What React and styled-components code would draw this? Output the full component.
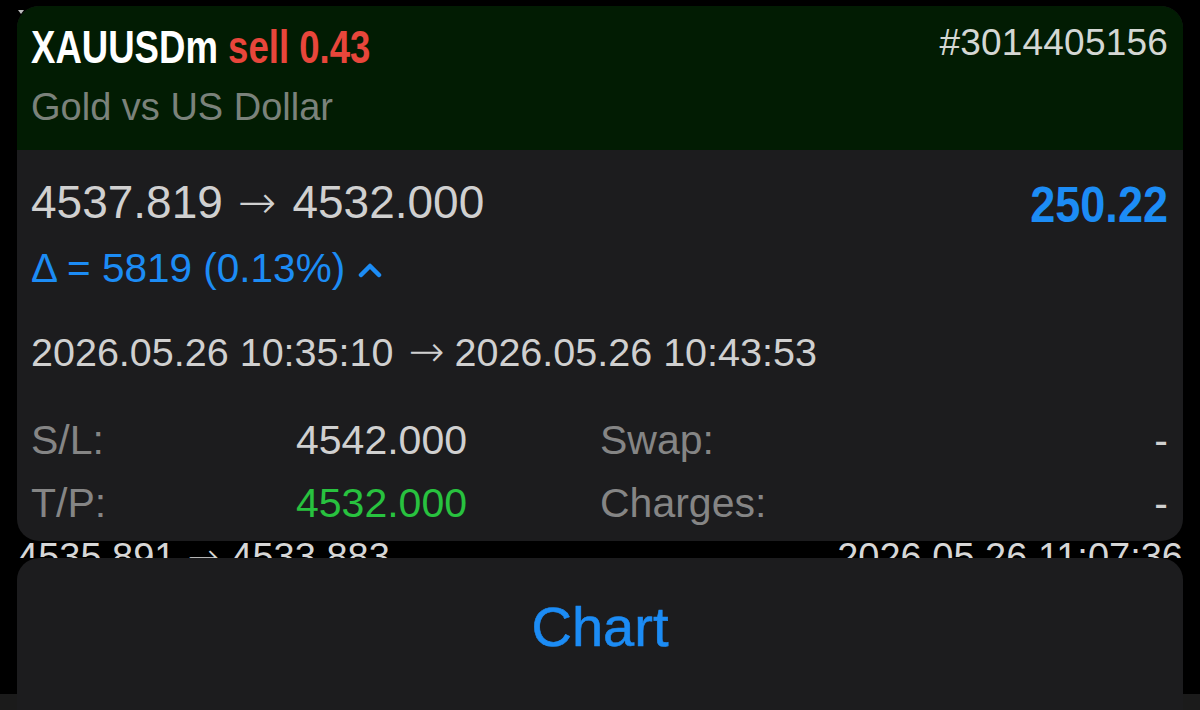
import React from "react";
import styled, { createGlobalStyle } from "styled-components";

const Global = createGlobalStyle`
  html, body { margin: 0; padding: 0; background: #000; }
  body { font-family: "Liberation Sans", Arial, sans-serif; -webkit-font-smoothing: antialiased; }
  #root { width: 1200px; height: 710px; overflow: hidden; }
`;

const Page = styled.div`
  position: relative;
  width: 1200px;
  height: 710px;
  background: #000;
  display: flex;
  flex-direction: column;
  padding-top: 6px;
  box-sizing: border-box;
  overflow: hidden;
`;

const Caret = styled.div`
  position: absolute;
  left: 18px;
  top: 10px;
  width: 0;
  height: 0;
  border-left: 3px solid transparent;
  border-right: 3px solid transparent;
  border-top: 4px solid #bdbdbd;
  z-index: 0;
`;

const Card = styled.section`
  position: relative;
  z-index: 1;
  margin: 0 17px;
  border-radius: 22px;
  overflow: hidden;
  background: #1c1c1e;
`;

const Header = styled.header`
  background: #021c03;
  padding: 15px 15px 23px 14px;
`;

const HeaderTop = styled.div`
  display: flex;
  justify-content: space-between;
  align-items: flex-start;
`;

const Narrow = styled.span`
  display: inline-block;
  font-family: "Liberation Sans", Arial, sans-serif;
  font-weight: 700;
  white-space: nowrap;
  transform: scaleX(${(p) => p.$scale});
  transform-origin: ${(p) => p.$origin || "left"} center;
`;

const Title = styled.div`
  font-size: 46px;
  line-height: 52px;
  color: #ffffff;
  white-space: nowrap;
`;

const Side = styled.span`
  color: #e8463b;
`;

const Ticket = styled.div`
  font-size: 37px;
  line-height: 44px;
  color: #d4d7d4;
  letter-spacing: 0.2px;
`;

const Subtitle = styled.div`
  margin-top: 14px;
  font-size: 38px;
  line-height: 40px;
  color: #7b827b;
`;

const Body = styled.div`
  padding: 27px 15px 13px 14px;
`;

const PriceRow = styled.div`
  display: flex;
  justify-content: space-between;
  align-items: center;
  height: 50px;
`;

const Prices = styled.div`
  font-size: 46px;
  line-height: 50px;
  color: #d0d0d0;
  white-space: nowrap;
`;

const Arrow = styled.span`
  font-family: "DejaVu Sans", sans-serif;
  font-weight: 300;
  font-size: ${(p) => p.$size || 44}px;
  margin: 0 ${(p) => p.$right || 14}px 0 ${(p) => p.$left || 14}px;
`;

const Profit = styled.div`
  font-size: 50px;
  line-height: 50px;
  color: #1c8cf5;
  margin-top: 6px;
`;

const Delta = styled.div`
  margin-top: 21px;
  display: flex;
  align-items: center;
  gap: 13px;
  font-size: 40.5px;
  line-height: 40px;
  color: #1c8cf5;
  white-space: nowrap;
`;

const Dates = styled.div`
  margin-top: 41px;
  font-size: 39.5px;
  line-height: 44px;
  color: #d0d0d0;
  white-space: nowrap;
`;

const Grid = styled.div`
  margin-top: 41px;
  display: grid;
  grid-template-columns: 436px 1fr;
  column-gap: 133px;
  row-gap: 13px;
`;

const Cell = styled.div`
  display: flex;
  justify-content: space-between;
  align-items: center;
  height: 50px;
  font-size: 41px;
`;

const Label = styled.span`
  color: #858585;
`;

const Value = styled.span`
  color: ${(p) => p.$color || "#d0d0d0"};
`;

const BehindRow = styled.div`
  height: 17px;
  overflow: hidden;
  display: flex;
  justify-content: space-between;
  padding: 0 17px 0 17px;
  color: #d6d6d6;
  font-size: 38px;
  line-height: 38px;
  white-space: nowrap;
`;

const BehindText = styled.span`
  margin-top: -3px;
`;

const Footer = styled.div`
  flex: 1;
  display: flex;
  flex-direction: column;
  background: linear-gradient(#000 0, #000 136px, #1b1b1b 136px);
  padding: 0 17px;
`;

const Sheet = styled.div`
  flex: 1;
  background: #1c1c1e;
  border-radius: 22px 22px 0 0;
  display: flex;
  justify-content: center;
  padding-top: 37px;
`;

const SheetButton = styled.button`
  all: unset;
  font-family: "Liberation Sans", Arial, sans-serif;
  font-size: 56px;
  line-height: 64px;
  height: 64px;
  color: #1c8cf5;
  cursor: pointer;
  -webkit-text-stroke: 0.6px #1c8cf5;
`;

const Chevron = () => (
  <svg width="24" height="16" viewBox="0 0 24 16" style={{ marginTop: 4 }}>
    <polyline
      points="3,13 12,4 21,13"
      fill="none"
      stroke="#1c8cf5"
      strokeWidth="4.5"
      strokeLinecap="round"
      strokeLinejoin="round"
    />
  </svg>
);

export default function App() {
  const rows = [
    { label: "S/L:", value: "4542.000" },
    { label: "Swap:", value: "-" },
    { label: "T/P:", value: "4532.000", color: "#28c23f" },
    { label: "Charges:", value: "-" },
  ];
  return (
    <>
      <Global />
      <Page>
        <Caret />
        <Card>
          <Header>
            <HeaderTop>
              <Title>
                <Narrow $scale={0.795}>
                  XAUUSDm <Side>sell 0.43</Side>
                </Narrow>
              </Title>
              <Ticket>#3014405156</Ticket>
            </HeaderTop>
            <Subtitle>Gold vs US Dollar</Subtitle>
          </Header>
          <Body>
            <PriceRow>
              <Prices>
                4537.819<Arrow $size={46} $left={15} $right={16}>→</Arrow>4532.000
              </Prices>
              <Profit>
                <Narrow $scale={0.9} $origin="right">250.22</Narrow>
              </Profit>
            </PriceRow>
            <Delta>
              <span>Δ = 5819 (0.13%)</span>
              <Chevron />
            </Delta>
            <Dates>
              2026.05.26 10:35:10<Arrow $size={43} $left={15} $right={10}>→</Arrow>2026.05.26 10:43:53
            </Dates>
            <Grid>
              {rows.map((r) => (
                <Cell key={r.label}>
                  <Label>{r.label}</Label>
                  <Value $color={r.color}>{r.value}</Value>
                </Cell>
              ))}
            </Grid>
          </Body>
        </Card>
        <BehindRow>
          <BehindText>
            4535.891<Arrow $size={38} $left={12} $right={12}>→</Arrow>4533.883
          </BehindText>
          <BehindText>2026.05.26 11:07:36</BehindText>
        </BehindRow>
        <Footer>
          <Sheet>
            <SheetButton>Chart</SheetButton>
          </Sheet>
        </Footer>
      </Page>
    </>
  );
}
